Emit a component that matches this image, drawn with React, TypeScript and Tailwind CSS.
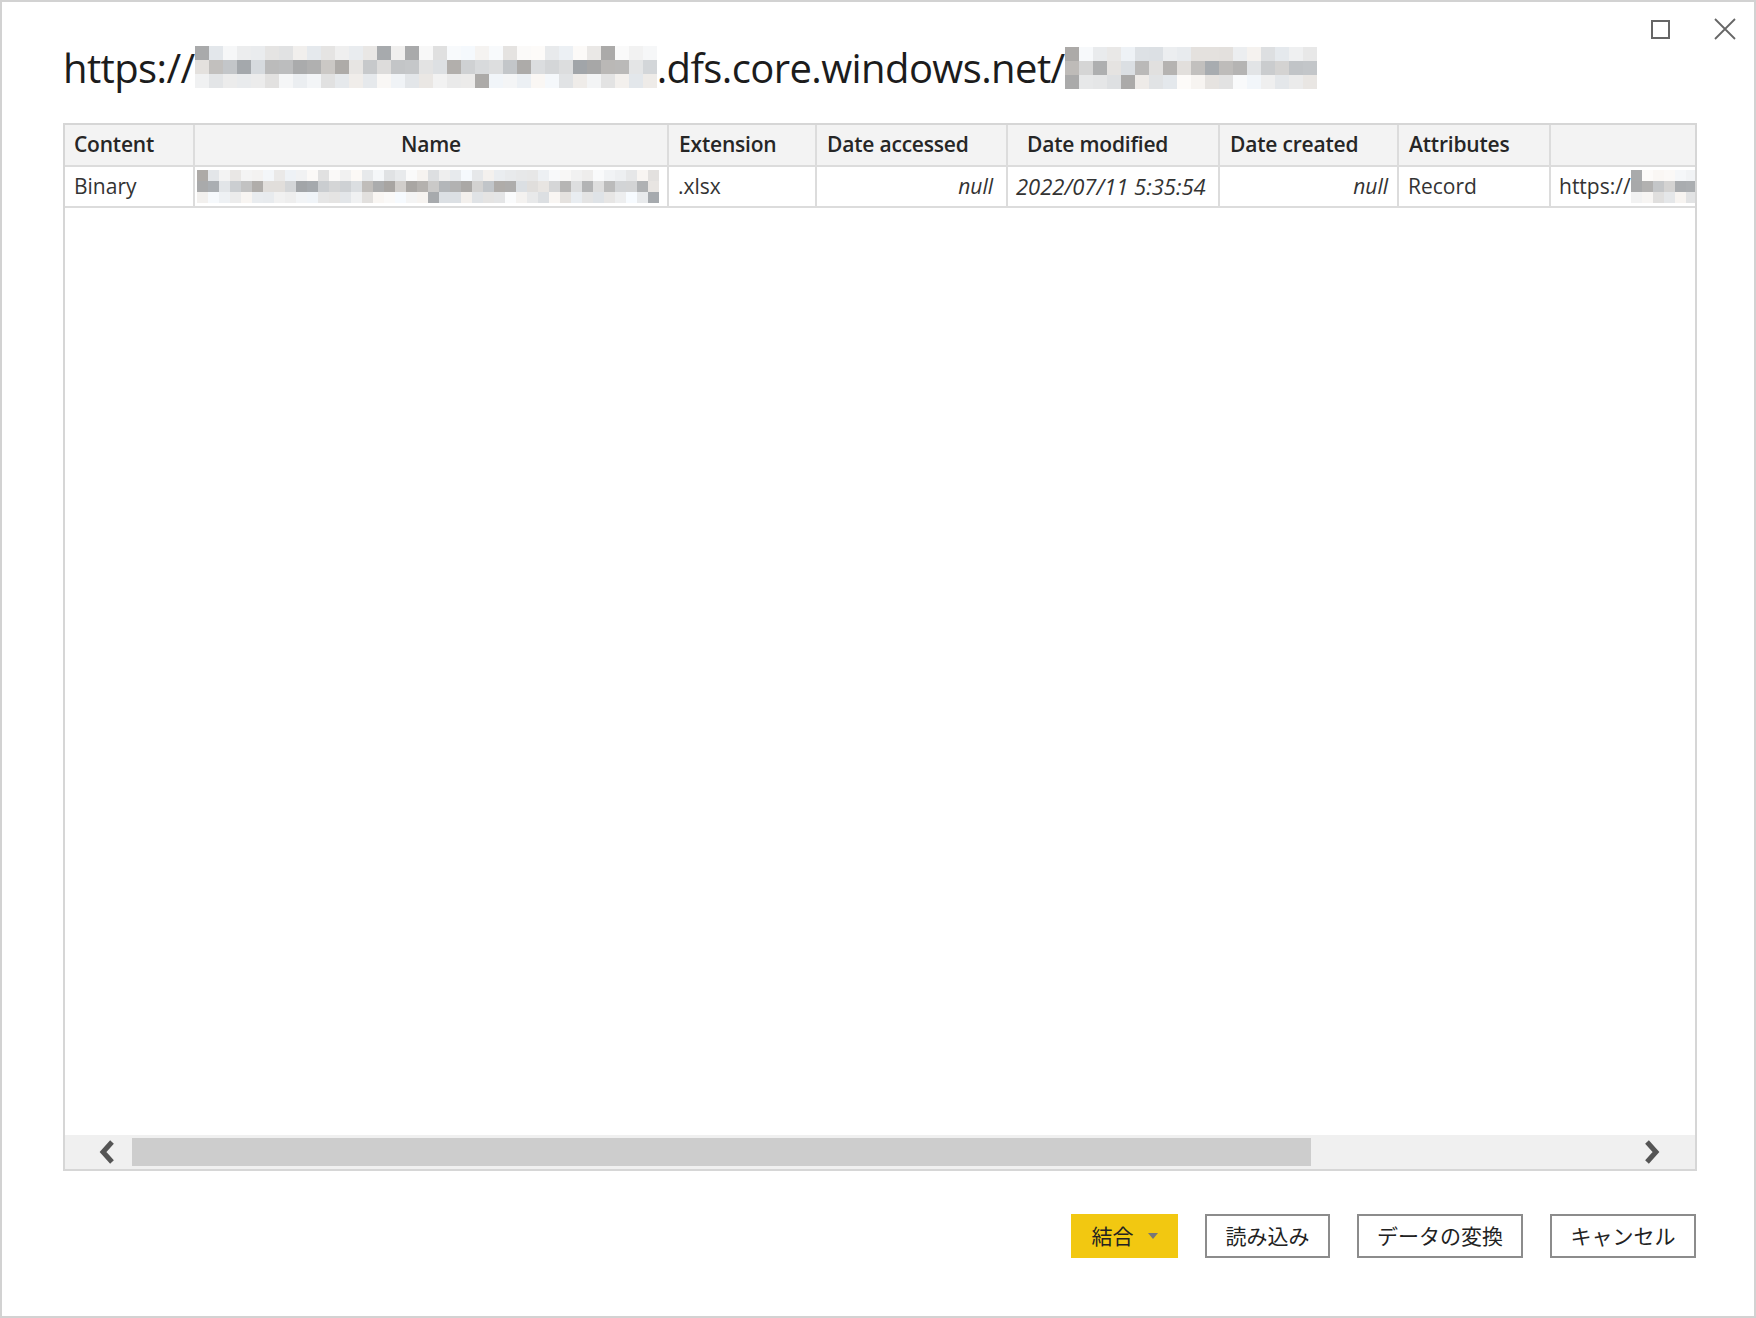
import React from "react";

// deterministic little prng so the pixelated (blurred-out) text looks the same each run
function rng(seed: number) {
  let s = seed;
  return () => {
    s = (s * 16807) % 2147483647;
    return (s - 1) / 2147483646;
  };
}

function Mosaic({
  cols,
  rows,
  size,
  seed,
  darkRow = 1,
}: {
  cols: number;
  rows: number;
  size: number;
  seed: number;
  darkRow?: number;
}) {
  const r = rng(seed);
  const cells = [];
  for (let y = 0; y < rows; y++) {
    for (let x = 0; x < cols; x++) {
      const v = r();
      let g: number;
      if (y === darkRow) g = 165 + Math.floor(v * 65);
      else g = 222 + Math.floor(v * 30);
      if (y !== darkRow && v < 0.05) g = 170;
      const tint = Math.floor(r() * 8) - 4;
      cells.push(
        <rect
          key={`${x}-${y}`}
          x={x * size}
          y={y * size}
          width={size}
          height={size}
          fill={`rgb(${g + tint},${g},${g - tint})`}
        />
      );
    }
  }
  return (
    <svg width={cols * size} height={rows * size} className="block shrink-0">
      {cells}
    </svg>
  );
}

const headers = [
  { label: "Content", cls: "bg-[#e6e6e6] pl-[9px]" },
  { label: "Name", cls: "justify-center" },
  { label: "Extension", cls: "pl-[10px]" },
  { label: "Date accessed", cls: "pl-[10px]" },
  { label: "Date modified", cls: "pl-[19px]" },
  { label: "Date created", cls: "pl-[10px]" },
  { label: "Attributes", cls: "pl-[10px]" },
  { label: "", cls: "" },
];

export default function App() {
  return (
    <div
      className="w-[1756px] h-[1318px] bg-white border-2 border-[#d2d2d2] flex flex-col text-[#333]"
      style={{ fontFamily: '"Open Sans", "Noto Sans", "Noto Sans CJK JP", sans-serif' }}
    >
      {/* window controls */}
      <div className="flex justify-end items-center gap-[44px] pr-[18px] pt-[16px] h-[38px]">
        <div className="w-[19px] h-[19px] border-2 border-[#666]" />
        <svg width="22" height="22" viewBox="0 0 22 22">
          <path d="M1 1 L21 21 M21 1 L1 21" stroke="#666" strokeWidth="1.8" />
        </svg>
      </div>

      {/* title */}
      <div className="flex items-center pl-[61px] h-[62px] -mt-[3px]">
        <span className="text-[40px] leading-none tracking-[-0.6px] font-medium text-[#1c1c1c]">https://</span>
        <div className="-mt-[2px]">
          <Mosaic cols={33} rows={3} size={14} seed={11} />
        </div>
        <span className="text-[40px] leading-none tracking-[-0.6px] font-medium text-[#1c1c1c]">
          .dfs.core.windows.net/
        </span>
        <Mosaic cols={18} rows={3} size={14} seed={29} darkRow={1} />
      </div>

      {/* table */}
      <div className="ml-[61px] mt-[24px] w-[1634px] h-[1048px] border-2 border-[#d6d6d6] flex flex-col overflow-hidden">
        <div className="grid grid-cols-[130px_474px_148px_191px_212px_179px_152px_1fr]">
          {headers.map((h, i) => (
            <div
              key={i}
              className={`h-[42px] flex items-center bg-[#f3f3f3] border-b-2 border-[#dcdcdc] ${
                i < 7 ? "border-r-2" : ""
              } text-[21px] font-semibold tracking-[-0.2px] text-[#262626] whitespace-nowrap ${h.cls}`}
            >
              {h.label}
            </div>
          ))}
          <div className="h-[41px] flex items-center pl-[9px] border-r-2 border-b-2 border-[#dcdcdc] text-[21px]">
            Binary
          </div>
          <div className="h-[41px] flex items-center pl-[2px] border-r-2 border-b-2 border-[#dcdcdc] overflow-hidden">
            <Mosaic cols={42} rows={3} size={11} seed={7} />
          </div>
          <div className="h-[41px] flex items-center pl-[9px] border-r-2 border-b-2 border-[#dcdcdc] text-[21px]">
            .xlsx
          </div>
          <div className="h-[41px] flex items-center justify-end pr-[13px] border-r-2 border-b-2 border-[#dcdcdc] text-[21px] italic">
            null
          </div>
          <div className="h-[41px] flex items-center pl-[8px] border-r-2 border-b-2 border-[#dcdcdc] text-[22px] italic whitespace-nowrap">
            2022/07/11 5:35:54
          </div>
          <div className="h-[41px] flex items-center justify-end pr-[9px] border-r-2 border-b-2 border-[#dcdcdc] text-[21px] italic">
            null
          </div>
          <div className="h-[41px] flex items-center pl-[9px] border-r-2 border-b-2 border-[#dcdcdc] text-[21px]">
            Record
          </div>
          <div className="h-[41px] flex items-center pl-[8px] border-b-2 border-[#dcdcdc] text-[21px] overflow-hidden whitespace-nowrap">
            https://
            <Mosaic cols={6} rows={3} size={11} seed={41} />
          </div>
        </div>

        <div className="flex-1" />

        {/* horizontal scrollbar */}
        <div className="h-[34px] bg-[#f0f0f0] flex items-center">
          <div className="w-[67px] flex pl-[33px]">
            <svg width="18" height="24" viewBox="0 0 18 24">
              <path d="M14 2 L5 12 L14 22" fill="none" stroke="#555" strokeWidth="5" />
            </svg>
          </div>
          <div className="w-[1179px] h-[28px] bg-[#cdcdcd]" />
          <div className="flex-1 flex justify-end pr-[34px]">
            <svg width="18" height="24" viewBox="0 0 18 24">
              <path d="M4 2 L13 12 L4 22" fill="none" stroke="#555" strokeWidth="5" />
            </svg>
          </div>
        </div>
      </div>

      {/* buttons */}
      <div className="flex justify-end gap-[27px] pr-[58px] mt-[43px]" style={{ fontFamily: '"Noto Sans CJK JP", sans-serif' }}>
        <button className="w-[107px] h-[44px] bg-[#f2c811] flex items-center justify-center gap-[14px] text-[21px] text-[#222]">
          結合
          <svg width="10" height="6" viewBox="0 0 10 6">
            <path d="M0 0 L10 0 L5 6 Z" fill="#777" />
          </svg>
        </button>
        <button className="w-[125px] h-[44px] border-2 border-[#8c8c8c] flex items-center justify-center text-[21px] text-[#222]">
          読み込み
        </button>
        <button className="w-[166px] h-[44px] border-2 border-[#8c8c8c] flex items-center justify-center text-[21px] text-[#222]">
          データの変換
        </button>
        <button className="w-[146px] h-[44px] border-2 border-[#8c8c8c] flex items-center justify-center text-[21px] text-[#222]">
          キャンセル
        </button>
      </div>
    </div>
  );
}
